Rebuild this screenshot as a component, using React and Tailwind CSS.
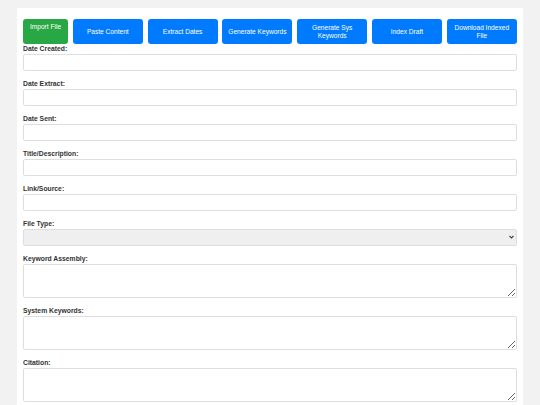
import React from 'react';

const buttons = [
  'Paste Content',
  'Extract Dates',
  'Generate Keywords',
  'Generate Sys Keywords',
  'Index Draft',
  'Download Indexed File',
];

const inputs = ['Date Created:', 'Date Extract:', 'Date Sent:', 'Title/Description:', 'Link/Source:'];
const areas = ['Keyword Assembly:', 'System Keywords:', 'Citation:'];

const Label = ({ children }) => (
  <label className="block text-[6.8px] leading-[9px] font-bold text-[#333] mb-px">{children}</label>
);

export default function App() {
  return (
    <div className="min-h-screen bg-[#f2f2f2] px-[17px] pt-[8px] font-['Liberation_Sans',Arial,sans-serif]">
      <div className="w-[506px] bg-white px-[6px] pt-[11px] pb-4">
        <div className="flex gap-[4.8px]">
          <label className="w-[45px] h-[25px] shrink-0 bg-[#28a745] text-white text-[6.6px] leading-[8px] text-center rounded-[3px] pt-[4px] cursor-pointer">
            Import File
          </label>
          {buttons.map((b) => (
            <button
              key={b}
              className="w-[70px] h-[25px] shrink-0 bg-[#007bff] text-white text-[6.6px] leading-[8px] rounded-[3px] px-[3px] flex items-center justify-center text-center"
            >
              {b}
            </button>
          ))}
        </div>

        {inputs.map((l) => (
          <div key={l} className="mb-[8px]">
            <Label>{l}</Label>
            <input
              type="text"
              className="block w-full h-[17px] border border-[#dedede] rounded-[2px] bg-white text-[7px] px-1"
            />
          </div>
        ))}

        <div className="mb-[8px]">
          <Label>File Type:</Label>
          <div className="relative">
            <select className="block w-full h-[17px] appearance-none border border-[#dedede] rounded-[2px] bg-[#efefef] text-[7px] px-1">
              <option></option>
            </select>
            <svg
              className="absolute right-[3px] top-[6px] w-[5px] h-[4px] pointer-events-none"
              viewBox="0 0 10 8"
              fill="none"
              stroke="#444"
              strokeWidth="2.2"
            >
              <path d="M1 2 L5 6 L9 2" />
            </svg>
          </div>
        </div>

        {areas.map((l) => (
          <div key={l} className="mb-[8px]">
            <Label>{l}</Label>
            <textarea className="block w-full h-[34px] border border-[#dedede] rounded-[2px] bg-white text-[7px] px-1" />
          </div>
        ))}
      </div>
    </div>
  );
}
